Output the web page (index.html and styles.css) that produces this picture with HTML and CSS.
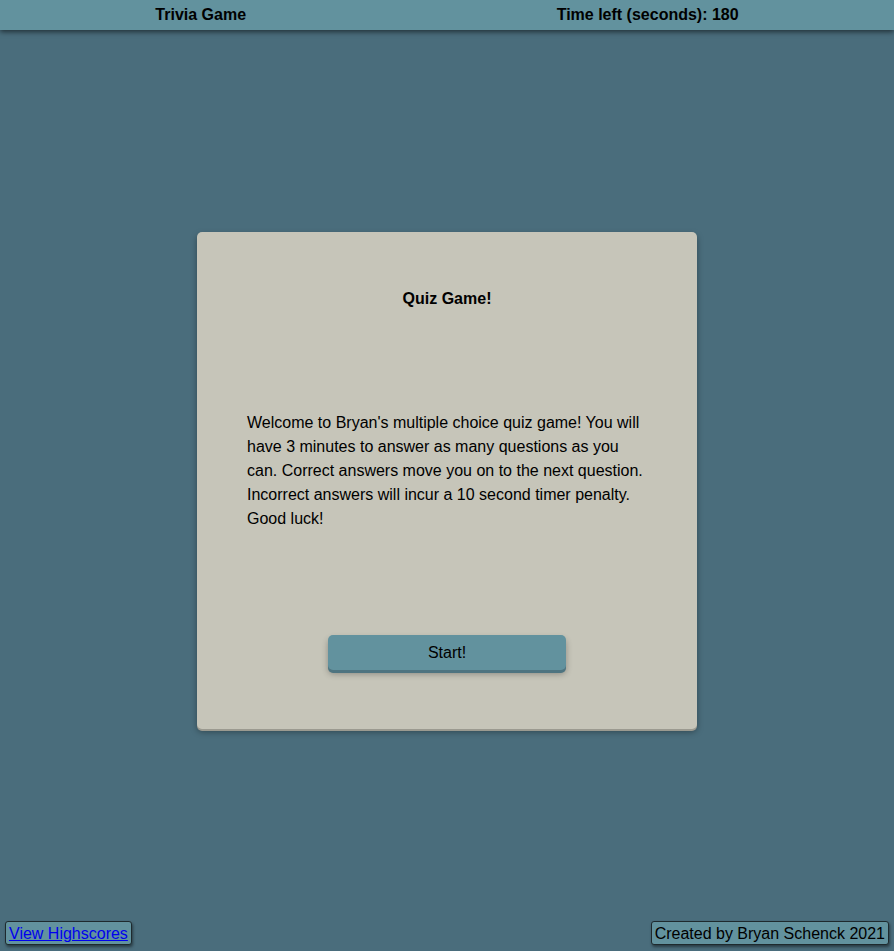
FILE: index.html
```html
<!DOCTYPE html>
<html lang="en">
<head>
<meta charset="utf-8">
<title>Trivia Game</title>
<link rel="stylesheet" href="styles.css">
</head>
<body>
<div class="page">
  <header class="topbar">
    <span class="topbar-item">Trivia Game</span>
    <span class="topbar-item">Time left (seconds): 180</span>
  </header>
  <main class="main">
    <section class="card">
      <h2 class="card-title">Quiz Game!</h2>
      <p class="card-text">Welcome to Bryan's multiple choice quiz game! You will have 3 minutes to answer as many questions as you can. Correct answers move you on to the next question. Incorrect answers will incur a 10 second timer penalty. Good luck!</p>
      <button class="start-btn">Start!</button>
    </section>
  </main>
  <footer class="footer">
    <a class="footer-box footer-link" href="#">View Highscores</a>
    <span class="footer-box">Created by Bryan Schenck 2021</span>
  </footer>
</div>
</body>
</html>
```
FILE: styles.css
```css
html, body {
  margin: 0;
  padding: 0;
  height: 100%;
}
body {
  background: #4a6d7c;
  font-family: "Liberation Sans", Arial, sans-serif;
  font-size: 16px;
  color: #000;
}
.page {
  display: flex;
  flex-direction: column;
  height: 951px;
}
.topbar {
  height: 30px;
  background: #62929e;
  display: flex;
  justify-content: space-around;
  align-items: center;
  font-weight: bold;
  box-shadow: 0 2px 5px rgba(0, 0, 0, 0.55);
  position: relative;
  z-index: 1;
}
.main {
  flex: 1;
  display: flex;
  justify-content: center;
  align-items: flex-start;
  padding-top: 202px;
}
.card {
  width: 500px;
  height: 497px;
  box-sizing: border-box;
  background: #c6c5b9;
  border-radius: 5px;
  padding: 57px 50px 0;
  display: flex;
  flex-direction: column;
  align-items: center;
  box-shadow: 0 2px 0 #9b9a90, 0 3px 6px rgba(0, 0, 0, 0.35);
}
.card-title {
  margin: 0;
  font-size: 16px;
  line-height: 20px;
  font-weight: bold;
  text-align: center;
}
.card-text {
  margin: 102px 0 0;
  line-height: 24px;
  width: 400px;
}
.start-btn {
  margin-top: 104px;
  width: 238px;
  height: 35px;
  padding: 1px 0 0;
  border: none;
  border-radius: 5px;
  background: #62929e;
  font-family: "Liberation Sans", Arial, sans-serif;
  font-size: 16px;
  color: #000;
  box-shadow: 0 3px 0 #4e7480, 0 4px 6px rgba(0, 0, 0, 0.3);
}
.footer {
  display: flex;
  justify-content: space-between;
  align-items: flex-end;
  padding: 0 5px 6px;
}
.footer-box {
  display: inline-block;
  background: #62929e;
  border: 1px solid #1e2a2e;
  border-radius: 3px;
  padding: 2px 3px 1px;
  line-height: 19px;
  box-shadow: 1px 2px 3px rgba(0, 0, 0, 0.45);
  color: #000;
}
.footer-link {
  color: #0000ee;
  text-decoration: underline;
}
```
